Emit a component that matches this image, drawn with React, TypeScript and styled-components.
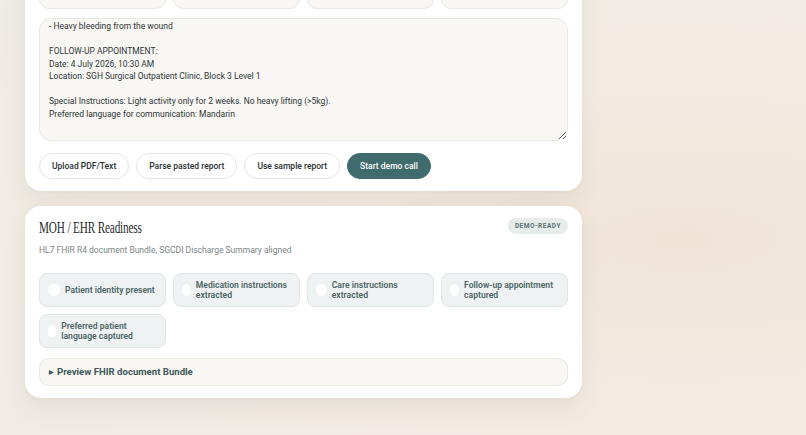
import React from 'react';
import styled, { createGlobalStyle } from 'styled-components';

const reportText = `- Heavy bleeding from the wound

FOLLOW-UP APPOINTMENT:
Date: 4 July 2026, 10:30 AM
Location: SGH Surgical Outpatient Clinic, Block 3 Level 1

Special Instructions: Light activity only for 2 weeks. No heavy lifting (>5kg).
Preferred language for communication: Mandarin`;

const checks = [
  'Patient identity present',
  'Medication instructions extracted',
  'Care instructions extracted',
  'Follow-up appointment captured',
  'Preferred patient language captured',
];

const App = () => {
  return (
    <>
      <GlobalStyle />
      <Page>
        <Card>
          {/* only the bottom edge of these fields is in view */}
          <FieldRow>
            <Field />
            <Field />
            <Field />
            <Field>
              <Select />
            </Field>
          </FieldRow>
          <Report readOnly defaultValue={reportText} />
          <Actions>
            <PillButton>Upload PDF/Text</PillButton>
            <PillButton>Parse pasted report</PillButton>
            <PillButton>Use sample report</PillButton>
            <PillButton primary>Start demo call</PillButton>
          </Actions>
        </Card>

        <Card>
          <CardHeader>
            <div>
              <Title>MOH / EHR Readiness</Title>
              <Subtitle>HL7 FHIR R4 document Bundle, SGCDI Discharge Summary aligned</Subtitle>
            </div>
            <Badge>DEMO-READY</Badge>
          </CardHeader>
          <CheckGrid>
            {checks.map((c) => (
              <CheckItem key={c}>
                <Dot />
                <CheckText>{c}</CheckText>
              </CheckItem>
            ))}
          </CheckGrid>
          <Preview>
            <summary>Preview FHIR document Bundle</summary>
          </Preview>
        </Card>
      </Page>
    </>
  );
};

export default App;

const GlobalStyle = createGlobalStyle`
  html, body {
    margin: 0;
    height: 100%;
    overflow: hidden;
  }
  body {
    font-family: Roboto, 'Noto Sans', sans-serif;
    background: radial-gradient(ellipse at 85% 55%, #f0e4d7 0%, #f2ebe2 45%, #efebe5 100%);
    color: #2f3637;
  }
`;

const Page = styled.div`
  width: 557px;
  margin: -55px 0 0 25px;
  display: flex;
  flex-direction: column;
  gap: 15px;
`;

const Card = styled.section`
  background: #fff;
  border-radius: 16px;
  padding: 12px 14px;
  box-shadow: 0 10px 24px rgba(90, 80, 60, 0.08), 0 1px 3px rgba(90, 80, 60, 0.05);
  display: flex;
  flex-direction: column;
`;

const FieldRow = styled.div`
  display: grid;
  grid-template-columns: repeat(4, 1fr);
  gap: 7px;
  margin-top: 2px;
`;

const Field = styled.div`
  height: 50px;
  box-sizing: border-box;
  padding: 4px 6px 6px;
  border: 1px solid #ebe8e1;
  border-radius: 10px;
  background: #f8f7f3;
  display: flex;
  flex-direction: column;
`;

const Select = styled.div`
  margin-top: auto;
  margin-bottom: 2px;
  height: 20px;
  box-sizing: border-box;
  border: 1px solid #dcd9d2;
  border-radius: 6px;
  background: #f3f1ec;
`;

const Report = styled.textarea`
  margin-top: 9px;
  height: 123px;
  box-sizing: border-box;
  resize: vertical;
  border: 1px solid #ebe8e1;
  border-radius: 12px;
  background: #f8f7f3;
  padding: 1px 9px 0;
  font-family: Roboto, 'Noto Sans', sans-serif;
  font-size: 8.5px;
  line-height: 12.5px;
  color: #2f3637;
  outline: none;
`;

const Actions = styled.div`
  display: flex;
  gap: 7px;
  margin-top: 12px;
`;

const PillButton = styled.button<{ primary?: boolean }>`
  height: 26px;
  padding: 0 12px;
  border-radius: 13px;
  border: 1px solid ${(p) => (p.primary ? '#3f6b6c' : '#e8e5df')};
  background: ${(p) => (p.primary ? '#3f6b6c' : '#fff')};
  color: ${(p) => (p.primary ? '#fff' : '#27302f')};
  font-family: Roboto, 'Noto Sans', sans-serif;
  font-size: 8.5px;
  font-weight: 500;
  cursor: pointer;
`;

const CardHeader = styled.div`
  display: flex;
  justify-content: space-between;
  align-items: flex-start;
`;

const Title = styled.h2`
  margin: 1px 0 0;
  font-family: 'Liberation Serif', 'DejaVu Serif', serif;
  font-weight: 400;
  font-size: 16px;
  letter-spacing: -0.2px;
  color: #262c2c;
  transform: scaleX(0.7);
  transform-origin: left center;
  white-space: nowrap;
`;

const Subtitle = styled.p`
  margin: 8px 0 0;
  font-size: 8.5px;
  color: #7b8585;
`;

const Badge = styled.span`
  background: #e6eceb;
  color: #58706f;
  border-radius: 8px;
  padding: 4px 7px;
  font-size: 6.5px;
  font-weight: 700;
  letter-spacing: 0.08em;
`;

const CheckGrid = styled.div`
  margin-top: 18px;
  display: grid;
  grid-template-columns: repeat(4, 1fr);
  gap: 7px;
`;

const CheckItem = styled.div`
  height: 34px;
  box-sizing: border-box;
  border: 1px solid #dfe6e5;
  border-radius: 8px;
  background: #eef2f2;
  padding: 0 8px;
  display: flex;
  align-items: center;
  gap: 5px;
`;

const Dot = styled.span`
  width: 12px;
  height: 12px;
  border-radius: 50%;
  background: #fff;
`;

const CheckText = styled.span`
  font-size: 8.6px;
  font-weight: 600;
  line-height: 10px;
  color: #4b6564;
`;

const Preview = styled.details`
  margin-top: 10px;
  height: 28px;
  box-sizing: border-box;
  border: 1px solid #ebe8e1;
  border-radius: 10px;
  background: #f8f7f3;
  padding: 0 9px;
  display: flex;
  align-items: center;

  summary {
    list-style: none;
    line-height: 26px;
    font-size: 9.6px;
    font-weight: 700;
    color: #3e5958;
    cursor: pointer;
  }

  summary::-webkit-details-marker {
    display: none;
  }

  summary::before {
    content: '▶';
    font-size: 6px;
    margin-right: 3px;
    vertical-align: 1px;
  }
`;
